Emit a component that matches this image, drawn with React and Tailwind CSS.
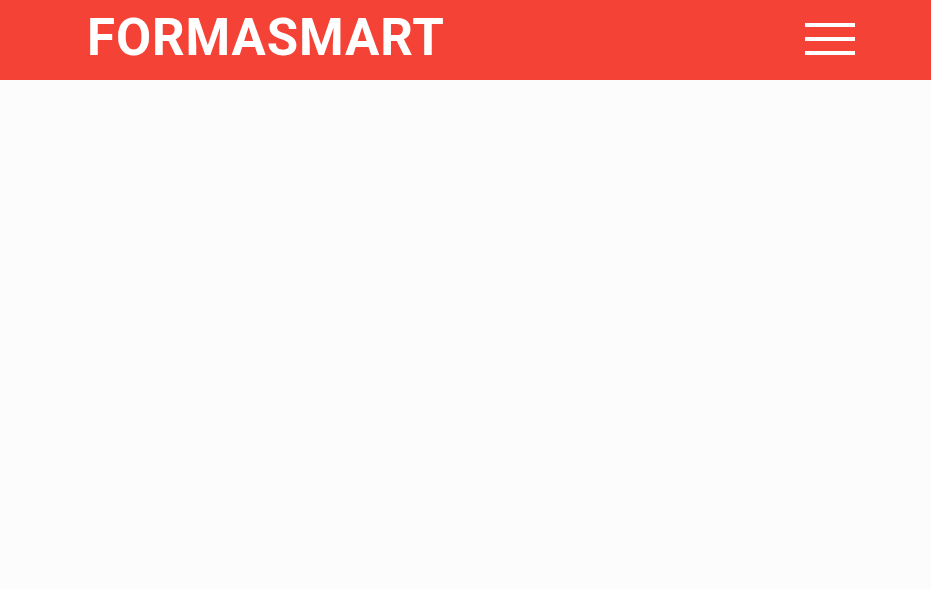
export default function App() {
  return (
    <div className="min-h-[589px] w-full bg-[#fcfcfc]" style={{ fontFamily: "Roboto, sans-serif" }}>
      <header className="flex h-[80px] items-start justify-between bg-[#f44336] pl-[87px] pr-[76px]">
        <h1 className="mt-[12px] text-[51px] font-bold leading-none tracking-[0.9px] text-white">FORMASMART</h1>
        <button className="mt-[23px] flex w-[50px] flex-col gap-[10.5px]">
          <span className="block h-[3.5px] w-full bg-white"></span>
          <span className="block h-[3.5px] w-full bg-white"></span>
          <span className="block h-[3.5px] w-full bg-white"></span>
        </button>
      </header>
    </div>
  );
}
